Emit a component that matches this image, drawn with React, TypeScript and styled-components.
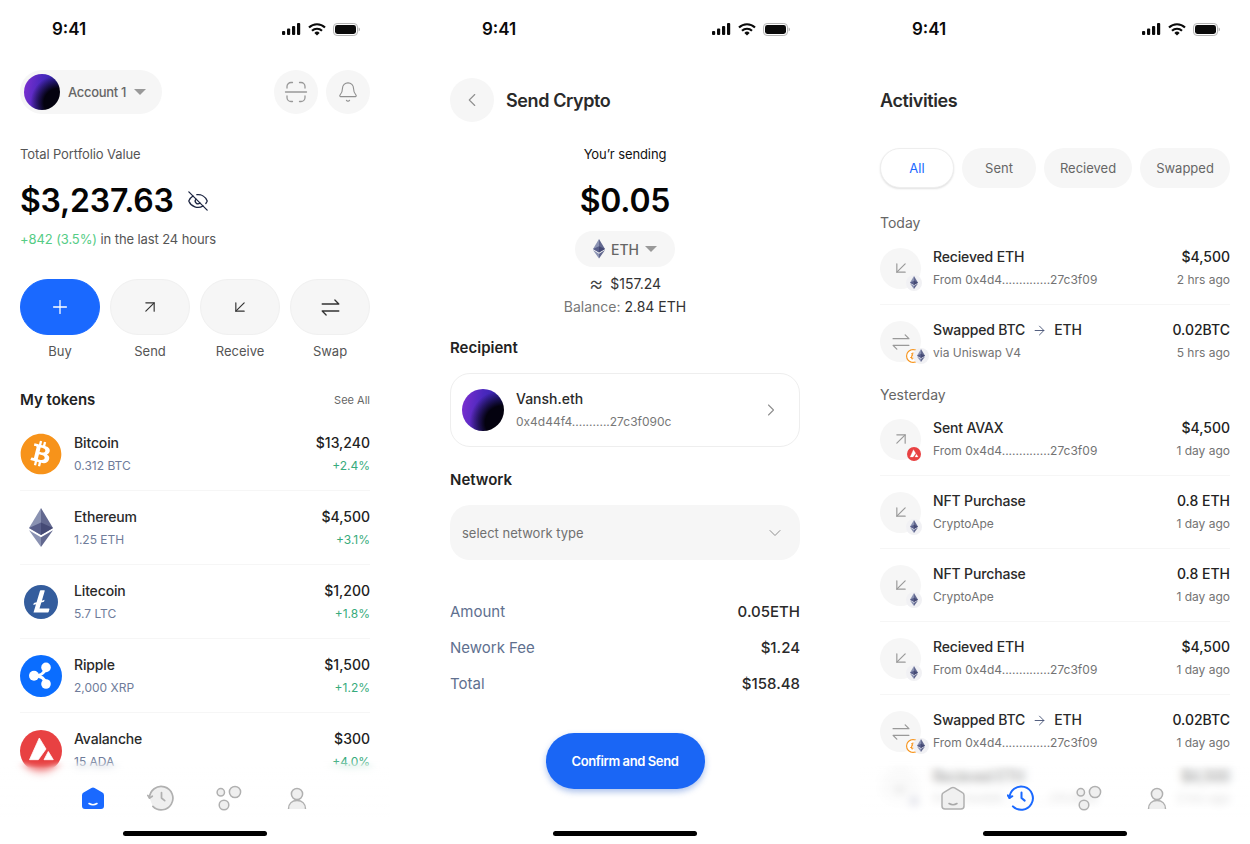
import React from 'react'
import styled, { createGlobalStyle } from 'styled-components'
import { ArrowDownLeft, ArrowRight, ArrowUpRight, Bell, ChevronDown, ChevronLeft, ChevronRight, EyeOff, Plus } from 'lucide-react'
import { FaBitcoin } from 'react-icons/fa'
import { SiLitecoin } from 'react-icons/si'

const GlobalStyle = createGlobalStyle`
  html, body { margin: 0; padding: 0; background: #fff; }
  body {
    font-family: Inter, "Liberation Sans", sans-serif;
    color: #1f1f1f;
    -webkit-font-smoothing: antialiased;
  }
  * { box-sizing: border-box; }
`

const Page = styled.div`
  display: flex;
  gap: 40px;
  width: 1250px;
  height: 844px;
  overflow: hidden;
`

const Phone = styled.section`
  position: relative;
  flex: 0 0 390px;
  height: 844px;
  overflow: hidden;
  background: #fff;
`

const StatusRow = styled.div`
  display: flex;
  align-items: center;
  justify-content: space-between;
  height: 58px;
  padding: 0 30px 0 52px;
`

const Time = styled.span`
  font-size: 17px;
  font-weight: 600;
  color: #0a0a0a;
`

const StatusIcons = styled.div`
  display: flex;
  align-items: center;
  gap: 7px;
`

const Body = styled.div`
  padding: 0 20px;
`

const TopBar = styled.div`
  display: flex;
  align-items: center;
  justify-content: space-between;
  margin-top: 12px;
`

const AccountPill = styled.div`
  display: flex;
  align-items: center;
  gap: 8px;
  width: 142px;
  height: 44px;
  padding: 0 4px;
  border-radius: 22px;
  background: #f6f6f6;
  font-size: 13px;
  font-weight: 500;
  letter-spacing: -0.3px;
  color: #666;
`

const Avatar = styled.div<{ $size: number }>`
  flex: none;
  width: ${(p) => p.$size}px;
  height: ${(p) => p.$size}px;
  border-radius: 50%;
  background:
    radial-gradient(circle at 95% 80%, #04020f 32%, rgba(10, 5, 50, 0) 62%),
    linear-gradient(100deg, #8030d2 0%, #4a28bd 45%, #2523a8 100%);
`

const Caret = styled.span`
  width: 0;
  height: 0;
  margin-left: 0;
  border-left: 6px solid transparent;
  border-right: 6px solid transparent;
  border-top: 6px solid #999;
`

const IconGroup = styled.div`
  display: flex;
  gap: 8px;
`

const RoundButton = styled.div`
  display: flex;
  align-items: center;
  justify-content: center;
  width: 44px;
  height: 44px;
  border-radius: 50%;
  background: #f6f6f6;
  color: #8f8f8f;
`

const SmallLine = styled.div<{ $top: number; $center?: boolean; $color?: string }>`
  margin-top: ${(p) => p.$top}px;
  font-size: 13px;
  line-height: 20px;
  letter-spacing: -0.1px;
  color: ${(p) => p.$color || '#555'};
  text-align: ${(p) => (p.$center ? 'center' : 'left')};
`

const Green = styled.span`
  color: #55cc85;
`

const BalanceRow = styled.div`
  display: flex;
  align-items: center;
  gap: 13px;
  margin-top: 15px;
  height: 44px;
`

const BigAmount = styled.div`
  font-size: 32px;
  line-height: 44px;
  font-weight: 600;
  letter-spacing: -0.2px;
  color: #050505;
`

const Actions = styled.div`
  display: grid;
  grid-template-columns: repeat(4, 80px);
  gap: 10px;
  margin-top: 30px;
`

const Action = styled.div`
  display: flex;
  flex-direction: column;
  align-items: center;
  gap: 6px;
  font-size: 13px;
  line-height: 20px;
  color: #555;
`

const ActionButton = styled.div<{ $primary?: boolean }>`
  display: flex;
  align-items: center;
  justify-content: center;
  width: 80px;
  height: 56px;
  border-radius: 28px;
  background: ${(p) => (p.$primary ? '#1a69ff' : '#f6f6f6')};
  border: 1px solid ${(p) => (p.$primary ? '#1a69ff' : '#f0f0f0')};
  color: ${(p) => (p.$primary ? '#fff' : '#333')};
`

const TokensHeader = styled.div`
  display: flex;
  align-items: center;
  justify-content: space-between;
  margin-top: 29px;
  height: 20px;
`

const SectionTitle = styled.div<{ $top?: number }>`
  margin-top: ${(p) => p.$top || 0}px;
  font-size: 15px;
  line-height: 20px;
  font-weight: 600;
  color: #222;
`

const SeeAll = styled.span`
  font-size: 11px;
  color: #666;
`

const TokenList = styled.div`
  margin-top: 7px;
`

const TokenRow = styled.div`
  display: flex;
  align-items: center;
  gap: 12px;
  height: 74px;
  padding-top: 1px;
  border-bottom: 1px solid #f6f6f6;
  &:last-child { border-bottom: 0; }
`

const TokenIcon = styled.div<{ $bg?: string }>`
  flex: none;
  display: flex;
  align-items: center;
  justify-content: center;
  width: 42px;
  height: 42px;
  border-radius: 50%;
  background: ${(p) => p.$bg || 'transparent'};
`

const RowText = styled.div`
  flex: 1;
  display: flex;
  flex-direction: column;
  gap: 3px;
  min-width: 0;
`

const RowRight = styled(RowText)`
  flex: none;
  align-items: flex-end;
`

const RowTitle = styled.div`
  display: flex;
  align-items: center;
  gap: 7px;
  font-size: 14px;
  line-height: 20px;
  font-weight: 500;
  letter-spacing: -0.15px;
  color: #2a2a2a;
`

const RowValue = styled.div`
  font-size: 14px;
  line-height: 20px;
  font-weight: 500;
  color: #222;
`

const TokenSub = styled.div`
  font-size: 12px;
  line-height: 20px;
  color: #6f7c9a;
`

const Change = styled.div`
  font-size: 12px;
  line-height: 20px;
  color: #37ab7c;
`

const HeaderRow = styled.div`
  display: flex;
  align-items: center;
  gap: 12px;
  height: 44px;
  margin-top: 20px;
`

const PageTitle = styled.h1`
  margin: 0;
  font-size: 18px;
  font-weight: 600;
  letter-spacing: -0.4px;
  color: #2a2a2a;
`

const Centered = styled.div`
  display: flex;
  flex-direction: column;
  align-items: center;
`

const CoinPill = styled.div`
  display: flex;
  align-items: center;
  gap: 6px;
  justify-content: center;
  width: 100px;
  height: 36px;
  margin-top: 8px;
  border-radius: 18px;
  background: #f6f6f6;
  font-size: 14px;
  font-weight: 500;
  color: #666;
`

const Approx = styled.div`
  display: flex;
  align-items: center;
  gap: 7px;
  height: 20px;
  margin-top: 6px;
  font-size: 14px;
  color: #333;
`

const ApproxSign = styled.span`
  font-size: 22px;
  font-weight: 300;
  line-height: 20px;
  color: #444;
`

const BalanceLine = styled.div`
  margin-top: 4px;
  font-size: 14px;
  line-height: 20px;
  color: #777;
  & b { font-weight: 400; color: #333; }
`

const RecipientCard = styled.div`
  display: flex;
  align-items: center;
  gap: 12px;
  height: 74px;
  margin-top: 15px;
  padding: 0 18px 0 11px;
  border: 1px solid #eee;
  border-radius: 20px;
  color: #8f8f8f;
`

const CardName = styled.div`
  font-size: 14px;
  line-height: 20px;
  font-weight: 500;
  color: #2a2a2a;
`

const CardAddress = styled.div`
  font-size: 12px;
  line-height: 20px;
  color: #777;
`

const SelectBox = styled.div`
  display: flex;
  align-items: center;
  justify-content: space-between;
  height: 55px;
  margin-top: 15px;
  padding: 0 15px 0 12px;
  border-radius: 20px;
  background: #f6f6f6;
  font-size: 13px;
  color: #707070;
`

const Summary = styled.div`
  display: flex;
  flex-direction: column;
  gap: 6px;
  margin-top: 36px;
`

const SummaryRow = styled.div`
  display: flex;
  align-items: center;
  justify-content: space-between;
  height: 30px;
  font-size: 15px;
  color: #60708f;
  & b { font-weight: 500; color: #2a2a2a; }
`

const ConfirmButton = styled.button`
  display: block;
  width: 159px;
  height: 56px;
  margin: 35px auto 0;
  border: 0;
  border-radius: 28px;
  background: #1a66f5;
  box-shadow: 0 3px 6px rgba(20, 80, 200, 0.35);
  font-family: inherit;
  font-size: 13px;
  font-weight: 600;
  letter-spacing: -0.4px;
  color: #fff;
`

const Tabs = styled.div`
  display: flex;
  gap: 8px;
  margin-top: 26px;
`

const Tab = styled.div<{ $active?: boolean; $width: number }>`
  display: flex;
  align-items: center;
  justify-content: center;
  width: ${(p) => p.$width}px;
  height: 40px;
  border-radius: 20px;
  font-size: 13px;
  background: ${(p) => (p.$active ? '#fff' : '#f6f6f6')};
  color: ${(p) => (p.$active ? '#1a69ff' : '#666')};
  border: ${(p) => (p.$active ? '1px solid #eee' : '0')};
  box-shadow: ${(p) => (p.$active ? '0 1px 2px rgba(0,0,0,0.12)' : 'none')};
`

const DayLabel = styled.div<{ $top: number; $bottom: number }>`
  margin: ${(p) => p.$top}px 0 ${(p) => p.$bottom}px;
  font-size: 14px;
  line-height: 20px;
  color: #666;
`

const ActivityRow = styled.div<{ $plain?: boolean; $tucked?: boolean }>`
  display: flex;
  align-items: center;
  gap: 12px;
  height: 73px;
  margin-top: ${(p) => (p.$tucked ? -16 : 0)}px;
  border-bottom: ${(p) => (p.$plain ? '0' : '1px solid #f6f6f6')};
`

const ActivityIcon = styled.div`
  position: relative;
  flex: none;
  display: flex;
  align-items: center;
  justify-content: center;
  width: 41px;
  height: 41px;
  border-radius: 50%;
  background: #f6f6f6;
  color: #999;
`

const Badge = styled.span<{ $bg: string; $left: number; $size: number }>`
  position: absolute;
  top: ${(p) => 35 - p.$size / 2}px;
  left: ${(p) => p.$left - p.$size / 2}px;
  display: flex;
  align-items: center;
  justify-content: center;
  width: ${(p) => p.$size}px;
  height: ${(p) => p.$size}px;
  border-radius: 50%;
  background: ${(p) => p.$bg};
`

const ActivitySub = styled.div`
  font-size: 12px;
  line-height: 20px;
  color: #737373;
  white-space: nowrap;
`

const NavBlur = styled.div`
  position: absolute;
  left: 0;
  right: 0;
  bottom: 0;
  height: 84px;
  backdrop-filter: blur(4px);
  background: linear-gradient(rgba(255, 255, 255, 0) 0, rgba(255, 255, 255, 0.45) 14px, rgba(255, 255, 255, 0.55) 30px, #fff 58px);
  mask-image: linear-gradient(to bottom, transparent 0, #000 8px);
`

const Nav = styled.nav`
  position: absolute;
  left: 0;
  right: 0;
  top: 784px;
  display: flex;
  justify-content: center;
`

const NavItem = styled.div`
  display: flex;
  justify-content: center;
  width: 68px;
`

const HomeIndicator = styled.div`
  position: absolute;
  left: 123px;
  bottom: 8px;
  width: 144px;
  height: 5px;
  border-radius: 3px;
  background: #000;
`

const EthLogo = ({ width }: { width: number }) => (
  <svg width={width} height={(width * 417) / 256} viewBox="0 0 256 417">
    <polygon fill="#62688f" points="128,0 256,212 128,288" />
    <polygon fill="#8a92b2" points="128,0 0,212 128,288" />
    <polygon fill="#62688f" points="128,312 128,417 256,237" />
    <polygon fill="#8a92b2" points="128,417 128,312 0,237" />
    <polygon fill="#454a75" points="128,288 256,212 128,154" />
    <polygon fill="#585e8a" points="0,212 128,288 128,154" />
  </svg>
)

const StatusGlyphs = () => (
  <StatusIcons>
    <svg width="19" height="12" viewBox="0 0 19 12" fill="#0a0a0a">
      <rect x="0" y="8" width="3.2" height="4" rx="1" />
      <rect x="5" y="5.5" width="3.2" height="6.5" rx="1" />
      <rect x="10" y="3" width="3.2" height="9" rx="1" />
      <rect x="15" y="0" width="3.2" height="12" rx="1" />
    </svg>
    <svg width="18" height="13" viewBox="0 0 18 13" fill="none" stroke="#0a0a0a" strokeWidth="2.1">
      <path d="M1 4.6a11.4 11.4 0 0 1 16 0" />
      <path d="M4 7.8a7.1 7.1 0 0 1 10 0" />
      <path d="M9 12.6l-2.6-2.7a3.6 3.6 0 0 1 5.2 0z" fill="#0a0a0a" stroke="none" />
    </svg>
    <svg width="27" height="13" viewBox="0 0 27 13">
      <rect x="0.5" y="0.5" width="24" height="12" rx="3.6" fill="none" stroke="#b5b5b5" />
      <rect x="2" y="2" width="21" height="9" rx="2.4" fill="#0a0a0a" />
      <path d="M25.6 4.6c.9.3 1.4 1 1.4 1.9s-.5 1.6-1.4 1.9z" fill="#b5b5b5" />
    </svg>
  </StatusIcons>
)

const StatusBar = () => (
  <StatusRow>
    <Time>9:41</Time>
    <StatusGlyphs />
  </StatusRow>
)

const ScanIcon = () => (
  <svg width="24" height="24" viewBox="0 0 24 24" fill="none" stroke="#999" strokeWidth="1.3" strokeLinecap="round">
    <path d="M3 8V6.5A4 4 0 0 1 7 2.5h1.5" />
    <path d="M15.5 2.5H17a4 4 0 0 1 4 4V8" />
    <path d="M3 16v1.5a4 4 0 0 0 4 4h1.5" />
    <path d="M15.5 21.5H17a4 4 0 0 0 4-4V16" />
    <path d="M1.5 12h21" />
  </svg>
)

const SwapIcon = ({ size, color }: { size: number; color: string }) => (
  <svg width={size} height={size} viewBox="0 0 24 24" fill="none" stroke={color} strokeWidth="1.5" strokeLinecap="round" strokeLinejoin="round">
    <path d="M2.5 8h19M17 3.5 21.5 8" />
    <path d="M21.5 16h-19M7 20.5 2.5 16" />
  </svg>
)

const RippleIcon = () => (
  <svg width="42" height="42" viewBox="0 0 42 42">
    <circle cx="21" cy="21" r="21" fill="#0a6dff" />
    <g fill="#fff">
      <circle cx="14" cy="20.8" r="5" />
      <circle cx="26" cy="12.4" r="4.8" />
      <circle cx="26" cy="29" r="4.8" />
    </g>
    <path d="M26 12.4C25 18 20 20.8 14 20.8c6 0 11 2.6 12 8.2" fill="none" stroke="#fff" strokeWidth="3" />
  </svg>
)

const AvaxMark = ({ size }: { size: number }) => (
  <svg width={size} height={size} viewBox="0 0 42 42">
    <circle cx="21" cy="21" r="21" fill="#e84142" />
    <g fill="#fff" stroke="#fff" strokeWidth="0.8" strokeLinejoin="round">
      <polygon points="9.5,29.7 19.3,8 26,19 18.3,29.7" />
      <polygon points="24,29.7 28.3,21.5 33.3,29.7" />
    </g>
  </svg>
)

const HomeGlyph = ({ active }: { active: boolean }) => (
  <svg width="28" height="28" viewBox="0 0 28 28">
    <path
      d="M12.4 3.9a3 3 0 0 1 3.2 0l7.8 4.7a3 3 0 0 1 1.6 2.6V22a3 3 0 0 1-3 3H6a3 3 0 0 1-3-3V11.2a3 3 0 0 1 1.6-2.6z"
      fill={active ? '#1a69ff' : '#f0f0f0'}
      stroke={active ? 'none' : '#b0b0b0'}
      strokeWidth="1.5"
    />
    <path d="M10 19.5q4 2.6 8 0" fill="none" stroke={active ? '#fff' : '#a8a8a8'} strokeWidth="1.5" strokeLinecap="round" />
  </svg>
)

const HistoryGlyph = ({ active }: { active: boolean }) => {
  const ink = active ? '#1a69ff' : '#b0b0b0'
  return (
    <svg width="28" height="28" viewBox="0 0 28 28" fill="none" stroke={ink} strokeWidth={active ? 2 : 1.7} strokeLinecap="round" strokeLinejoin="round">
      <path d="M2.5 14A11.7 11.7 0 1 1 5.9 22.4" fill={active ? 'none' : '#efefef'} />
      <path d="M.8 11.4 2.5 14l2.8-1.8" />
      <path d="M14.5 8.5V14l3.2 2.6" />
    </svg>
  )
}

const CirclesGlyph = () => (
  <svg width="28" height="28" viewBox="0 0 28 28" fill="#efefef" stroke="#b0b0b0" strokeWidth="1.5">
    <circle cx="20" cy="8" r="5.6" />
    <circle cx="5.8" cy="8.3" r="3.7" />
    <circle cx="9" cy="21" r="4.8" />
  </svg>
)

const PersonGlyph = () => (
  <svg width="28" height="28" viewBox="0 0 28 28" fill="#efefef" stroke="#b0b0b0" strokeWidth="1.5">
    <circle cx="14" cy="10" r="5.6" />
    <path d="M5.5 25c0-5.5 3.6-8.4 8.5-8.4s8.5 2.9 8.5 8.4" />
  </svg>
)

const BottomNav = ({ active }: { active: 'home' | 'history' }) => (
  <>
    <NavBlur />
    <Nav>
      <NavItem><HomeGlyph active={active === 'home'} /></NavItem>
      <NavItem><HistoryGlyph active={active === 'history'} /></NavItem>
      <NavItem><CirclesGlyph /></NavItem>
      <NavItem><PersonGlyph /></NavItem>
    </Nav>
    <HomeIndicator />
  </>
)

const tokens = [
  { name: 'Bitcoin', sub: '0.312 BTC', value: '$13,240', change: '+2.4%', icon: <FaBitcoin size={42} color="#f7931a" /> },
  { name: 'Ethereum', sub: '1.25 ETH', value: '$4,500', change: '+3.1%', icon: <EthLogo width={24} /> },
  { name: 'Litecoin', sub: '5.7 LTC', value: '$1,200', change: '+1.8%', icon: <SiLitecoin size={34} color="#345d9d" /> },
  { name: 'Ripple', sub: '2,000 XRP', value: '$1,500', change: '+1.2%', icon: <RippleIcon /> },
  { name: 'Avalanche', sub: '15 ADA', value: '$300', change: '+4.0%', icon: <AvaxMark size={42} /> },
]

type ActivityKind = 'in' | 'out' | 'swap'

const EthBadge = () => (
  <Badge $bg="#f1f1f4" $left={34} $size={16}>
    <EthLogo width={8} />
  </Badge>
)

const SwapBadges = () => (
  <>
    <Badge $bg="#f7931a" $left={33} $size={14}>
      <FaBitcoin size={12} color="#fff" />
    </Badge>
    <Badge $bg="#f1f1f4" $left={41} $size={16}>
      <EthLogo width={8} />
    </Badge>
  </>
)

const AvaxBadge = () => (
  <Badge $bg="transparent" $left={34} $size={14}>
    <AvaxMark size={14} />
  </Badge>
)

const ActivityItem = ({ kind, title, sub, value, time, badge, plain, tucked, to }: {
  kind: ActivityKind
  title: string
  sub: string
  value: string
  time: string
  badge: React.ReactNode
  plain?: boolean
  tucked?: boolean
  to?: string
}) => (
  <ActivityRow $plain={plain} $tucked={tucked}>
    <ActivityIcon>
      {kind === 'in' && <ArrowDownLeft size={20} strokeWidth={1.4} />}
      {kind === 'out' && <ArrowUpRight size={20} strokeWidth={1.4} />}
      {kind === 'swap' && <SwapIcon size={20} color="#999" />}
      {badge}
    </ActivityIcon>
    <RowText>
      <RowTitle>
        {title}
        {to && <ArrowRight size={15} strokeWidth={1.5} color="#4a5578" />}
        {to}
      </RowTitle>
      <ActivitySub>{sub}</ActivitySub>
    </RowText>
    <RowRight>
      <RowValue>{value}</RowValue>
      <ActivitySub>{time}</ActivitySub>
    </RowRight>
  </ActivityRow>
)

const PortfolioScreen = () => (
  <Phone>
    <StatusBar />
    <Body>
      <TopBar>
        <AccountPill>
          <Avatar $size={36} />
          Account 1
          <Caret />
        </AccountPill>
        <IconGroup>
          <RoundButton><ScanIcon /></RoundButton>
          <RoundButton><Bell size={22} strokeWidth={1.2} /></RoundButton>
        </IconGroup>
      </TopBar>
      <SmallLine $top={30}>Total Portfolio Value</SmallLine>
      <BalanceRow>
        <BigAmount>$3,237.63</BigAmount>
        <EyeOff size={22} strokeWidth={1.4} color="#1b2440" />
      </BalanceRow>
      <SmallLine $top={6}><Green>+842 (3.5%)</Green> in the last 24 hours</SmallLine>
      <Actions>
        <Action><ActionButton $primary><Plus size={22} strokeWidth={1.4} /></ActionButton>Buy</Action>
        <Action><ActionButton><ArrowUpRight size={20} strokeWidth={1.4} /></ActionButton>Send</Action>
        <Action><ActionButton><ArrowDownLeft size={20} strokeWidth={1.4} /></ActionButton>Receive</Action>
        <Action><ActionButton><SwapIcon size={21} color="#333" /></ActionButton>Swap</Action>
      </Actions>
      <TokensHeader>
        <SectionTitle>My tokens</SectionTitle>
        <SeeAll>See All</SeeAll>
      </TokensHeader>
      <TokenList>
        {tokens.map((t) => (
          <TokenRow key={t.name}>
            <TokenIcon>{t.icon}</TokenIcon>
            <RowText>
              <RowTitle>{t.name}</RowTitle>
              <TokenSub>{t.sub}</TokenSub>
            </RowText>
            <RowRight>
              <RowValue>{t.value}</RowValue>
              <Change>{t.change}</Change>
            </RowRight>
          </TokenRow>
        ))}
      </TokenList>
    </Body>
    <BottomNav active="home" />
  </Phone>
)

const SendScreen = () => (
  <Phone>
    <StatusBar />
    <Body>
      <HeaderRow>
        <RoundButton><ChevronLeft size={22} strokeWidth={1.2} /></RoundButton>
        <PageTitle>Send Crypto</PageTitle>
      </HeaderRow>
      <SmallLine $top={22} $center $color="#111">You’r sending</SmallLine>
      <Centered>
        <BalanceRow>
          <BigAmount>$0.05</BigAmount>
        </BalanceRow>
        <CoinPill>
          <EthLogo width={12} />
          ETH
          <Caret />
        </CoinPill>
        <Approx><ApproxSign>≈</ApproxSign>$157.24</Approx>
        <BalanceLine>Balance: <b>2.84 ETH</b></BalanceLine>
      </Centered>
      <SectionTitle $top={21}>Recipient</SectionTitle>
      <RecipientCard>
        <Avatar $size={42} />
        <RowText>
          <CardName>Vansh.eth</CardName>
          <CardAddress>0x4d44f4...........27c3f090c</CardAddress>
        </RowText>
        <ChevronRight size={20} strokeWidth={1.3} />
      </RecipientCard>
      <SectionTitle $top={23}>Network</SectionTitle>
      <SelectBox>
        select network type
        <ChevronDown size={20} strokeWidth={1.2} color="#8f8f8f" />
      </SelectBox>
      <Summary>
        <SummaryRow>Amount<b>0.05ETH</b></SummaryRow>
        <SummaryRow>Nework Fee<b>$1.24</b></SummaryRow>
        <SummaryRow>Total<b>$158.48</b></SummaryRow>
      </Summary>
      <ConfirmButton>Confirm and Send</ConfirmButton>
    </Body>
    <HomeIndicator />
  </Phone>
)

const ActivitiesScreen = () => (
  <Phone>
    <StatusBar />
    <Body>
      <HeaderRow>
        <PageTitle>Activities</PageTitle>
      </HeaderRow>
      <Tabs>
        <Tab $active $width={74}>All</Tab>
        <Tab $width={74}>Sent</Tab>
        <Tab $width={88}>Recieved</Tab>
        <Tab $width={90}>Swapped</Tab>
      </Tabs>
      <DayLabel $top={25} $bottom={-1}>Today</DayLabel>
      <ActivityItem kind="in" title="Recieved ETH" sub="From 0x4d4..............27c3f09" value="$4,500" time="2 hrs ago" badge={<EthBadge />} />
      <ActivityItem kind="swap" title="Swapped BTC" to="ETH" sub="via Uniswap V4" value="0.02BTC" time="5 hrs ago" badge={<SwapBadges />} plain />
      <DayLabel $top={7} $bottom={-2}>Yesterday</DayLabel>
      <ActivityItem kind="out" title="Sent AVAX" sub="From 0x4d4..............27c3f09" value="$4,500" time="1 day ago" badge={<AvaxBadge />} />
      <ActivityItem kind="in" title="NFT Purchase" sub="CryptoApe" value="0.8 ETH" time="1 day ago" badge={<EthBadge />} />
      <ActivityItem kind="in" title="NFT Purchase" sub="CryptoApe" value="0.8 ETH" time="1 day ago" badge={<EthBadge />} />
      <ActivityItem kind="in" title="Recieved ETH" sub="From 0x4d4..............27c3f09" value="$4,500" time="1 day ago" badge={<EthBadge />} />
      <ActivityItem kind="swap" title="Swapped BTC" to="ETH" sub="From 0x4d4..............27c3f09" value="0.02BTC" time="1 day ago" badge={<SwapBadges />} plain />
      <ActivityItem kind="in" title="Recieved ETH" sub="From 0x4d4..............27c3f09" value="$4,500" time="2 hrs ago" badge={<EthBadge />} plain tucked />
    </Body>
    <BottomNav active="history" />
  </Phone>
)

export default function App() {
  return (
    <Page>
      <GlobalStyle />
      <PortfolioScreen />
      <SendScreen />
      <ActivitiesScreen />
    </Page>
  )
}
